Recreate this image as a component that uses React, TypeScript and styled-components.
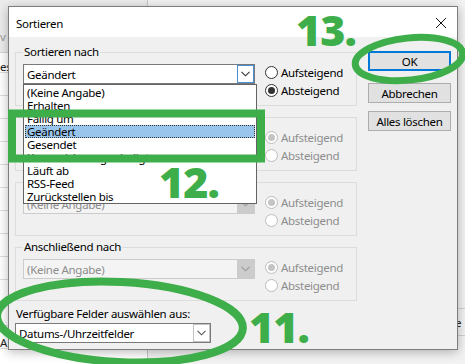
import React from "react";
import styled, { createGlobalStyle } from "styled-components";

const GlobalStyle = createGlobalStyle`
  html, body {
    margin: 0;
    padding: 0;
    background: #f3f3f3;
  }
  body {
    font-family: "Segoe UI", "Noto Sans", "Open Sans", sans-serif;
    font-size: 11.5px;
    letter-spacing: -0.3px;
    color: #000;
  }
`;

const GREEN = "#3dae4a";

const Page = styled.div`
  position: relative;
  width: 465px;
  height: 364px;
  overflow: hidden;
`;

/* Outlook window behind the dialog */
const Backdrop = styled.div`
  display: flex;
  width: 100%;
  height: 100%;
`;

const ListPane = styled.div`
  width: 147px;
  border-right: 1px solid #c8c8c8;
  background-color: #fff;
  background-image: repeating-linear-gradient(
    to bottom,
    transparent 0,
    transparent 22px,
    #dcdcdc 22px,
    #dcdcdc 23px
  );
  background-position: 0 50px;
  display: flex;
  flex-direction: column;
`;

const ListHeader = styled.div`
  height: 44px;
  background: #ececec;
  border-bottom: 1px solid #d4d4d4;
  display: flex;
  align-items: flex-end;
  padding: 0 0 8px 0;
  color: #9a9a9a;
`;

const ListRow = styled.div<{ $h: number }>`
  height: ${(p) => p.$h}px;
  display: flex;
  align-items: center;
  color: #222;
`;

const ReadingPane = styled.div`
  flex: 1;
  background: #f2f2f2;
  display: flex;
  flex-direction: column;
  justify-content: flex-end;
  align-items: flex-end;
`;

const ReadingRow = styled.div`
  width: 10px;
  height: 26px;
  border-top: 1px solid #d0d0d0;
  border-bottom: 1px solid #d0d0d0;
  margin-bottom: 28px;
  display: flex;
  align-items: center;
  color: #222;
`;

/* Dialog window */
const Dialog = styled.div`
  position: absolute;
  left: 8px;
  top: 6px;
  width: 448px;
  height: 342px;
  background: #f0f0f0;
  border: 1px solid #7d7d7d;
  box-shadow: 0 2px 10px rgba(0, 0, 0, 0.28);
  display: flex;
  flex-direction: column;
`;

const TitleBar = styled.div`
  height: 30px;
  background: #fff;
  display: flex;
  align-items: center;
  justify-content: space-between;
  padding: 0 8px 0 7px;
  flex-shrink: 0;
`;

const Title = styled.span`
  margin-top: 2px;
`;

const CloseIcon = styled.svg`
  width: 12px;
  height: 12px;
  margin-right: 2px;
  margin-top: 1px;
`;

const Body = styled.div`
  flex: 1;
  display: flex;
  padding: 7px 0 0 6px;
`;

const LeftColumn = styled.div`
  width: 342px;
  display: flex;
  flex-direction: column;
`;

const Groups = styled.div`
  display: flex;
  flex-direction: column;
  gap: 3px;
`;

const Group = styled.fieldset`
  margin: 0;
  padding: 4px 7px 5px 7px;
  border: 1px solid #dcdcdc;
  border-radius: 0;
  height: 62px;
  box-sizing: border-box;
  min-width: 0;
`;

const Legend = styled.legend`
  padding: 0 1px;
  margin-left: 0;
  line-height: 16px;
`;

const GroupRow = styled.div`
  display: flex;
  align-items: flex-start;
`;

const Combo = styled.div<{ $disabled?: boolean; $width: number }>`
  width: ${(p) => p.$width}px;
  height: 20px;
  box-sizing: border-box;
  border: 1px solid ${(p) => (p.$disabled ? "#cccccc" : "#7a7a7a")};
  background: ${(p) => (p.$disabled ? "#f4f4f4" : "#fff")};
  color: ${(p) => (p.$disabled ? "#8d8d8d" : "#000")};
  display: flex;
  align-items: center;
  justify-content: space-between;
  padding-left: 3px;
  flex-shrink: 0;
`;

const ComboButton = styled.div<{ $variant: "focus" | "normal" | "disabled" }>`
  width: 17px;
  height: 18px;
  box-sizing: border-box;
  display: flex;
  align-items: center;
  justify-content: center;
  border: 1px solid
    ${(p) =>
      p.$variant === "focus"
        ? "#4a8fd6"
        : p.$variant === "disabled"
        ? "#cccccc"
        : "#c4c4c4"};
  background: ${(p) => (p.$variant === "disabled" ? "#cccccc" : "#fff")};
`;

const Chevron: React.FC<{ color: string }> = ({ color }) => (
  <svg width="9" height="6" viewBox="0 0 9 6">
    <path d="M0.5 0.8 L4.5 4.8 L8.5 0.8" fill="none" stroke={color} strokeWidth="1.1" />
  </svg>
);

const RadioList = styled.div`
  display: flex;
  flex-direction: column;
  margin-left: 10px;
  margin-top: -1px;
`;

const RadioRow = styled.div<{ $disabled?: boolean }>`
  height: 18px;
  display: flex;
  align-items: center;
  gap: 3px;
  color: ${(p) => (p.$disabled ? "#8d8d8d" : "#000")};
`;

const RadioCircle = styled.span<{ $checked?: boolean; $disabled?: boolean }>`
  width: 13px;
  height: 13px;
  box-sizing: border-box;
  border-radius: 50%;
  border: 1px solid ${(p) => (p.$disabled ? "#bcbcbc" : "#333")};
  background: #fff;
  display: flex;
  align-items: center;
  justify-content: center;

  &::after {
    content: "";
    width: 7px;
    height: 7px;
    border-radius: 50%;
    background: ${(p) => (p.$disabled ? "#c4c4c4" : "#333")};
    display: ${(p) => (p.$checked ? "block" : "none")};
  }
`;

const FieldsLabel = styled.div`
  margin-top: 5px;
  margin-left: 1px;
  line-height: 16px;
`;

const FieldsCombo = styled.div`
  margin-top: 1px;
`;

const RightColumn = styled.div`
  display: flex;
  flex-direction: column;
  margin-left: 11px;
  padding-top: 7px;
`;

const Button = styled.div<{ $default?: boolean; $gap: number }>`
  width: 83px;
  height: 20px;
  box-sizing: border-box;
  margin-top: ${(p) => p.$gap}px;
  background: #e1e1e1;
  border: ${(p) => (p.$default ? "2px solid #0078d7" : "1px solid #adadad")};
  display: flex;
  align-items: center;
  justify-content: center;
`;

/* Open drop-down list */
const DropList = styled.div`
  position: absolute;
  left: 23px;
  top: 84px;
  width: 234px;
  height: 120px;
  box-sizing: border-box;
  border: 1px solid #646464;
  background: #fff;
  padding-top: 1px;
  display: flex;
  flex-direction: column;
  z-index: 2;
`;

const DropItem = styled.div<{ $selected?: boolean }>`
  height: 13px;
  line-height: 13px;
  padding-left: 2px;
  margin: 0 1px;
  white-space: nowrap;
  box-sizing: border-box;
  background: ${(p) => (p.$selected ? "#99c5ec" : "transparent")};
  outline: ${(p) => (p.$selected ? "1px dotted #333" : "none")};
  outline-offset: -1px;
`;

/* Annotation layer */
const Annotations = styled.svg`
  position: absolute;
  left: 0;
  top: 0;
  width: 465px;
  height: 364px;
  pointer-events: none;
  z-index: 3;
`;

const Step = styled.span<{ $x: number; $y: number }>`
  position: absolute;
  left: ${(p) => p.$x}px;
  top: ${(p) => p.$y}px;
  font-family: "Open Sans", "Noto Sans", sans-serif;
  font-weight: 800;
  font-size: 43px;
  line-height: 43px;
  letter-spacing: -1px;
  color: ${GREEN};
  z-index: 4;
`;

const sortFields = [
  "(Keine Angabe)",
  "Erhalten",
  "Fällig um",
  "Geändert",
  "Gesendet",
  "Kennzeichnung erledigt am",
  "Läuft ab",
  "RSS-Feed",
  "Zurückstellen bis",
];

type GroupProps = {
  label: string;
  disabled?: boolean;
  value: string;
  ascending?: boolean;
  focus?: boolean;
};

const SortGroup: React.FC<GroupProps> = ({ label, disabled, value, ascending, focus }) => (
  <Group>
    <Legend>{label}</Legend>
    <GroupRow>
      <Combo $width={232} $disabled={disabled}>
        <span>{value}</span>
        <ComboButton $variant={disabled ? "disabled" : focus ? "focus" : "normal"}>
          <Chevron color={disabled ? "#9a9a9a" : "#333"} />
        </ComboButton>
      </Combo>
      <RadioList>
        <RadioRow $disabled={disabled}>
          <RadioCircle $checked={ascending} $disabled={disabled} />
          Aufsteigend
        </RadioRow>
        <RadioRow $disabled={disabled}>
          <RadioCircle $checked={!ascending} $disabled={disabled} />
          Absteigend
        </RadioRow>
      </RadioList>
    </GroupRow>
  </Group>
);

export default function App() {
  return (
    <Page>
      <GlobalStyle />
      <Backdrop>
        <ListPane>
          <ListHeader>
            <span>v</span>
          </ListHeader>
          <ListRow $h={26}>es</ListRow>
          <ListRow $h={250} />
          <ListRow $h={26}>A</ListRow>
        </ListPane>
        <ReadingPane>
          <ReadingRow>e</ReadingRow>
        </ReadingPane>
      </Backdrop>

      <Dialog>
        <TitleBar>
          <Title>Sortieren</Title>
          <CloseIcon viewBox="0 0 12 12">
            <path d="M1 1 L11 11 M11 1 L1 11" stroke="#111" strokeWidth="1" fill="none" />
          </CloseIcon>
        </TitleBar>
        <Body>
          <LeftColumn>
            <Groups>
              <SortGroup label="Sortieren nach" value="Geändert" focus />
              <SortGroup label="Anschließend nach" value="(Keine Angabe)" disabled ascending />
              <SortGroup label="Anschließend nach" value="(Keine Angabe)" disabled ascending />
              <SortGroup label="Anschließend nach" value="(Keine Angabe)" disabled ascending />
            </Groups>
            <FieldsLabel>Verfügbare Felder auswählen aus:</FieldsLabel>
            <FieldsCombo>
              <Combo $width={196}>
                <span>Datums-/Uhrzeitfelder</span>
                <ComboButton $variant="normal">
                  <Chevron color="#555" />
                </ComboButton>
              </Combo>
            </FieldsCombo>
          </LeftColumn>
          <RightColumn>
            <Button $default $gap={0}>OK</Button>
            <Button $gap={12}>Abbrechen</Button>
            <Button $gap={8}>Alles löschen</Button>
          </RightColumn>
        </Body>
      </Dialog>

      <DropList>
        {sortFields.map((f) => (
          <DropItem key={f} $selected={f === "Geändert"}>
            {f}
          </DropItem>
        ))}
      </DropList>

      <Annotations viewBox="0 0 465 364">
        <rect x="12" y="113.5" width="249" height="45" fill="none" stroke={GREEN} strokeWidth="8" />
        <ellipse
          cx="409"
          cy="59"
          rx="54"
          ry="21"
          fill="none"
          stroke={GREEN}
          strokeWidth="7"
          transform="rotate(-6 409 59)"
        />
        <ellipse
          cx="120"
          cy="322"
          rx="123"
          ry="40"
          fill="none"
          stroke={GREEN}
          strokeWidth="8"
          transform="rotate(3 120 322)"
        />
      </Annotations>
      <Step $x={296} $y={8}>13.</Step>
      <Step $x={159} $y={160}>12.</Step>
      <Step $x={249} $y={305}>11.</Step>
    </Page>
  );
}
